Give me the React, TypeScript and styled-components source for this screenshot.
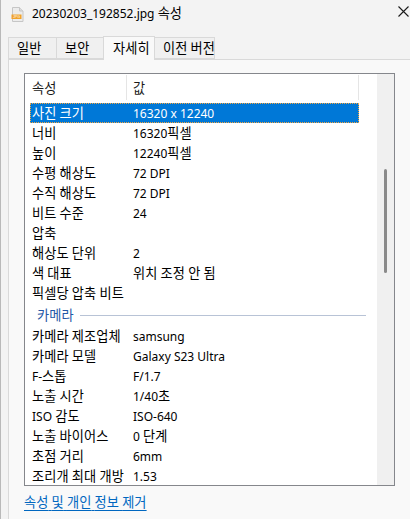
import React from 'react';
import styled, { createGlobalStyle } from 'styled-components';

const GlobalStyle = createGlobalStyle`
  html, body {
    margin: 0;
    padding: 0;
    background: #f3f3f3;
    overflow: hidden;
  }
  body {
    font-family: "Noto Sans", "Noto Sans CJK KR", sans-serif;
    font-size: 12px;
    color: #000;
  }
`;

// Hangul glyphs of the system UI font are wider than Noto CJK's, so runs of Hangul are scaled up a bit
const Hangul = styled.span`
  font-size: 1.1em;
  letter-spacing: 0.1px;
`;

const ko = (text: string) =>
  text.split(/([\uac00-\ud7a3]+)/).map((part, i) =>
    /[\uac00-\ud7a3]/.test(part) ? <Hangul key={i}>{part}</Hangul> : part
  );

const Window = styled.div`
  width: 410px;
  height: 519px;
  box-sizing: border-box;
  border-left: 1px solid #b9b9b9;
  background: #f3f3f3;
  display: flex;
  flex-direction: column;
  overflow: hidden;
`;

const TitleBar = styled.div`
  height: 28px;
  display: flex;
  align-items: center;
  padding-left: 10px;
  gap: 8px;
  flex-shrink: 0;
`;

const Title = styled.span`
  font-size: 12px;
  line-height: 1;
  margin-top: -1px;
  white-space: nowrap;
`;

const CloseButton = styled.div`
  margin-left: auto;
  width: 12px;
  height: 12px;
  margin-top: -4px;
  display: flex;
`;

const TabStrip = styled.div`
  display: flex;
  align-items: flex-end;
  padding-left: 8px;
  margin-top: 8px;
  height: 23px;
  flex-shrink: 0;
  position: relative;
  z-index: 1;
`;

const Tab = styled.div<{ $active?: boolean; $width: number }>`
  box-sizing: border-box;
  width: ${(p) => p.$width}px;
  height: ${(p) => (p.$active ? 24 : 22)}px;
  padding-left: ${(p) => (p.$active ? 9 : 8)}px;
  display: flex;
  align-items: center;
  background: ${(p) => (p.$active ? '#f9f9f9' : '#f0f0f0')};
  border: 1px solid #d9d9d9;
  border-bottom: ${(p) => (p.$active ? 'none' : '1px solid #d9d9d9')};
  margin-left: -1px;
  margin-bottom: ${(p) => (p.$active ? -1 : 0)}px;
  font-size: 12px;
  line-height: 1;
  white-space: nowrap;
  padding-top: ${(p) => (p.$active ? 0 : 1)}px;
`;

const Panel = styled.div`
  flex: 1;
  margin-left: 7px;
  margin-right: -20px;
  background: #f9f9f9;
  border-top: 1px solid #d9d9d9;
  border-left: 1px solid #d9d9d9;
  padding: 13px 0 0 15px;
  display: flex;
  flex-direction: column;
`;

const ListBox = styled.div`
  width: 371px;
  height: 413px;
  box-sizing: border-box;
  border: 1px solid #85878c;
  background: #fff;
  display: flex;
  overflow: hidden;
`;

const ListContent = styled.div`
  flex: 1;
  padding-left: 5px;
  overflow: hidden;
`;

const HeaderRow = styled.div`
  display: flex;
  height: 29px;
  align-items: stretch;
`;

const HeaderCell = styled.div<{ $width: number; $pad: number }>`
  box-sizing: border-box;
  width: ${(p) => p.$width}px;
  padding-left: ${(p) => p.$pad}px;
  margin: 1px 0 3px;
  display: flex;
  align-items: center;
  border-right: 1px solid #e5e5e5;
  color: #1a1a1a;
`;

const Row = styled.div<{ $selected?: boolean }>`
  box-sizing: border-box;
  width: 329px;
  height: 20px;
  display: grid;
  grid-template-columns: 101px 1fr;
  align-items: center;
  background: ${(p) => (p.$selected ? '#0078d7' : 'transparent')};
  color: ${(p) => (p.$selected ? '#fff' : '#000')};
  outline: ${(p) => (p.$selected ? '1px dotted #f4a640' : 'none')};
  outline-offset: -1px;
  white-space: nowrap;
`;

const Cell = styled.span`
  padding-left: 2px;
  line-height: 20px;
`;

const GroupRow = styled.div`
  width: 336px;
  height: 23px;
  display: flex;
  align-items: center;
  padding-left: 7px;
  box-sizing: border-box;
  gap: 6px;
  color: #2458a6;
`;

const GroupLine = styled.div`
  flex: 1;
  height: 1px;
  background: #b8c3d6;
  margin-top: 1px;
`;

const ScrollTrack = styled.div`
  width: 17px;
  flex-shrink: 0;
  background: #f0f0f0;
  display: flex;
  justify-content: center;
`;

const ScrollThumb = styled.div<{ $top: number; $length: number }>`
  width: 3px;
  margin-top: ${(p) => p.$top}px;
  height: ${(p) => p.$length}px;
  border-radius: 2px;
  background: #8a8a8a;
`;

const Link = styled.a`
  margin-top: 8px;
  align-self: flex-start;
  color: #0067c0;
  text-decoration: underline;
  text-underline-offset: 3px;
  font-size: 12px;
  line-height: 1.3;
  cursor: pointer;
`;

const JpgIcon = () => (
  <svg width="13" height="15" viewBox="0 0 13 15">
    <path d="M1.5 0.5 H8.5 L12 4 V14.5 H1.5 Z" fill="#ececec" stroke="#c6c6c6" />
    <path d="M8.5 0.5 V4 H12" fill="#dcdcdc" stroke="#c6c6c6" />
    <rect x="0.5" y="7.5" width="10" height="4.5" fill="#f0a22c" />
    <text x="5.5" y="11.2" fontSize="3.6" fill="#fff" textAnchor="middle" fontFamily="Liberation Sans, sans-serif">
      JPG
    </text>
  </svg>
);

const CloseIcon = () => (
  <svg width="11" height="11" viewBox="0 0 11 11">
    <path d="M0.5 0.5 L10.5 10.5 M10.5 0.5 L0.5 10.5" stroke="#1a1a1a" strokeWidth="1.1" />
  </svg>
);

const imageProps: [string, string][] = [
  ['너비', '16320픽셀'],
  ['높이', '12240픽셀'],
  ['수평 해상도', '72 DPI'],
  ['수직 해상도', '72 DPI'],
  ['비트 수준', '24'],
  ['압축', ''],
  ['해상도 단위', '2'],
  ['색 대표', '위치 조정 안 됨'],
  ['픽셀당 압축 비트', ''],
];

const cameraProps: [string, string][] = [
  ['카메라 제조업체', 'samsung'],
  ['카메라 모델', 'Galaxy S23 Ultra'],
  ['F-스톱', 'F/1.7'],
  ['노출 시간', '1/40초'],
  ['ISO 감도', 'ISO-640'],
  ['노출 바이어스', '0 단계'],
  ['초점 거리', '6mm'],
  ['조리개 최대 개방', '1.53'],
];

const tabs = [
  { label: '일반', width: 49 },
  { label: '보안', width: 48 },
  { label: '자세히', width: 52, active: true },
  { label: '이전 버전', width: 61 },
];

export default function App() {
  return (
    <>
      <GlobalStyle />
      <Window>
        <TitleBar>
          <JpgIcon />
          <Title>{ko('20230203_192852.jpg 속성')}</Title>
          <CloseButton>
            <CloseIcon />
          </CloseButton>
        </TitleBar>
        <TabStrip>
          {tabs.map((t) => (
            <Tab key={t.label} $active={t.active} $width={t.width}>
              <span>{ko(t.label)}</span>
            </Tab>
          ))}
        </TabStrip>
        <Panel>
          <ListBox>
            <ListContent>
              <HeaderRow>
                <HeaderCell $width={97} $pad={2}>{ko('속성')}</HeaderCell>
                <HeaderCell $width={232} $pad={6}>{ko('값')}</HeaderCell>
              </HeaderRow>
              <Row $selected>
                <Cell>{ko('사진 크기')}</Cell>
                <Cell>16320 x 12240</Cell>
              </Row>
              {imageProps.map(([k, v]) => (
                <Row key={k}>
                  <Cell>{ko(k)}</Cell>
                  <Cell>{ko(v)}</Cell>
                </Row>
              ))}
              <GroupRow>
                <span>{ko('카메라')}</span>
                <GroupLine />
              </GroupRow>
              {cameraProps.map(([k, v]) => (
                <Row key={k}>
                  <Cell>{ko(k)}</Cell>
                  <Cell>{ko(v)}</Cell>
                </Row>
              ))}
            </ListContent>
            <ScrollTrack>
              <ScrollThumb $top={95} $length={104} />
            </ScrollTrack>
          </ListBox>
          <Link>{ko('속성 및 개인 정보 제거')}</Link>
        </Panel>
      </Window>
    </>
  );
}
